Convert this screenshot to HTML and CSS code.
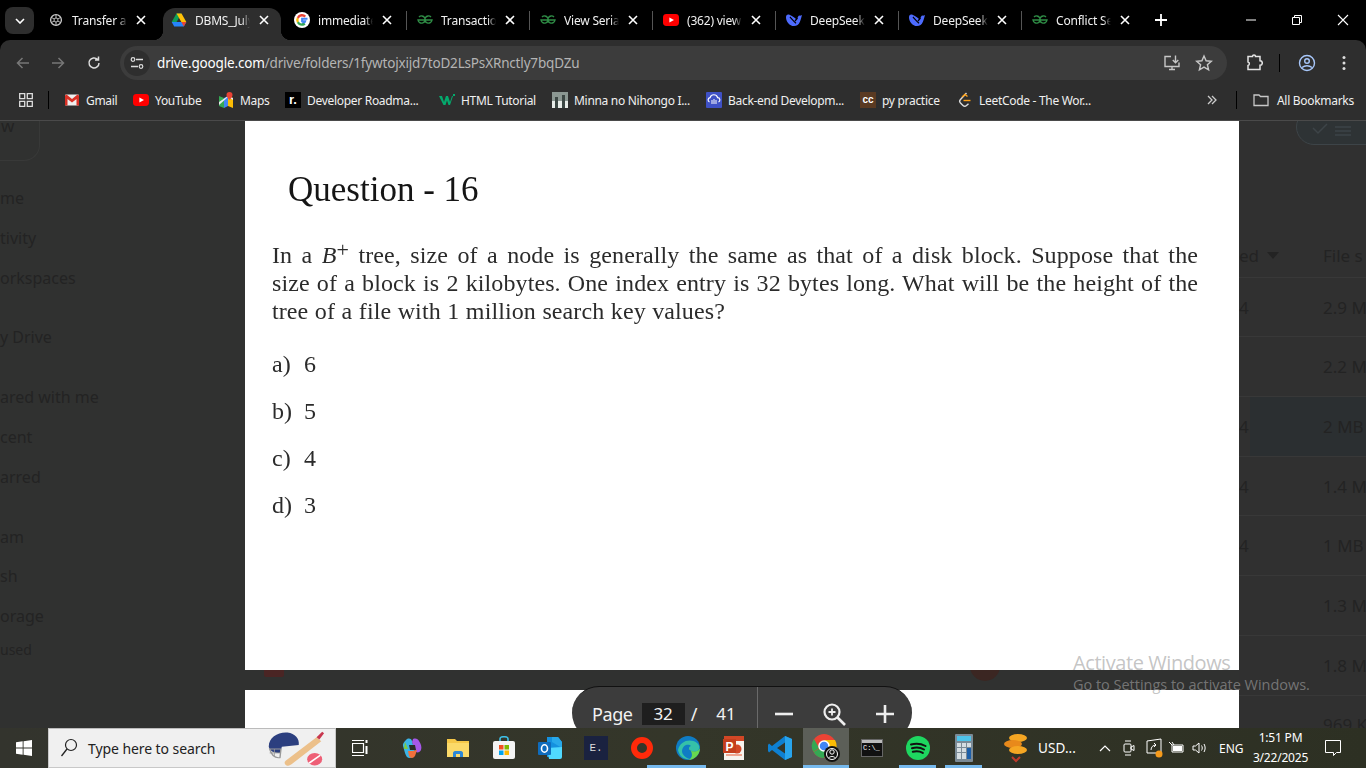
FILE: index.html
```html
<!DOCTYPE html>
<html lang="en">
<head>
<meta charset="utf-8">
<title>DBMS - Google Drive</title>
<link rel="stylesheet" href="styles.css">
</head>
<body>
<svg class="defs" width="0" height="0" aria-hidden="true">
  <symbol id="gfg" viewBox="0 0 16 16"><path d="M8 8h7a3.6 3.6 0 1 1-1-3M8 8H1a3.6 3.6 0 1 0 1-3M5.5 8h5" fill="none" stroke="#2f8d46" stroke-width="1.4"/></symbol>
  <symbol id="yt" viewBox="0 0 16 16"><rect y="2" width="16" height="12" rx="3.4" fill="#f00"/><path d="M6.4 5.4 11 8l-4.600 2.600z" fill="#fff"/></symbol>
  <symbol id="ds" viewBox="0 0 16 16"><path d="M16 3c-1 .6-2 .8-3 .5-1 1-1.500 2.500-2.500 4C9 6 6.500 4 3 2.600 1 2.200 0 3.400 0 5.400 0 9.500 3.500 14 8 14c2.800 0 4.800-1.500 5.800-4 .5-1.200 1.200-3.400 2.200-7z" fill="#4d6bfe"/><path d="M4 5c1.800 2 3.800 4.400 6 6.200M11.500 6 9 9" stroke="#000" stroke-width="1.200" fill="none"/></symbol>
  <symbol id="x" viewBox="0 0 10 10"><path d="M1 1l8 8M9 1l-8 8" stroke="#fff" stroke-width="1.600" fill="none"/></symbol>
</svg>

<header class="tabstrip">
  <button class="tab-menu"><svg width="10" height="6" viewBox="0 0 10 6"><path d="M1 1l4 4 4-4" stroke="#fff" stroke-width="1.600" fill="none"/></svg></button>
  <div class="tab">
    <svg class="fav" viewBox="0 0 16 16"><circle cx="8" cy="8" r="5.400" fill="none" stroke="#ccc" stroke-width="1.300"/><path d="M8 3v10M3.500 5.500l9 5M12.500 5.500l-9 5" stroke="#ccc" stroke-width=".9"/><circle cx="8" cy="8" r="2" fill="#000" stroke="#ccc" stroke-width=".9"/></svg>
    <span class="tab-title">Transfer a file</span><svg class="tab-x"><use href="#x"/></svg>
  </div>
  <div class="tab active">
    <svg class="fav" viewBox="0 0 16 16"><path d="M5.500 1.500h5L5.600 10H.7z" fill="#0f9d58"/><path d="M10.500 1.500 15.300 10h-5L5.500 1.500z" fill="#ffc107"/><path d="M.7 10h14.600l-2.500 4.500H3.200z" fill="#2684fc"/><path d="M10.300 10h5l-2.500 4.500z" fill="#ea4335"/></svg>
    <span class="tab-title">DBMS_July_2024</span><svg class="tab-x"><use href="#x"/></svg>
  </div>
  <div class="tab nosep">
    <svg class="fav" viewBox="0 0 16 16"><circle cx="8" cy="8" r="8" fill="#fff"/><path d="M13.500 6.800H8.100v2.400h3.100a3.300 3.300 0 0 1-3.200 2.300" fill="none" stroke="#4285f4" stroke-width="2"/><path d="M8 11.500a3.500 3.500 0 0 1-3.300-2.300L2.900 10.800A5.700 5.700 0 0 0 8 13.800c1.400 0 2.700-.5 3.600-1.300l-1.700-1.400c-.5.300-1.100.4-1.900.4z" fill="#34a853"/><path d="M4.700 9.200a3.600 3.600 0 0 1 0-2.400L2.900 5.200a5.700 5.700 0 0 0 0 5.600z" fill="#fbbc05"/><path d="M8 4.500c1 0 1.800.3 2.400.9l1.700-1.700A5.700 5.700 0 0 0 2.900 5.200l1.800 1.600A3.500 3.500 0 0 1 8 4.500z" fill="#ea4335"/></svg>
    <span class="tab-title">immediate recoverable</span><svg class="tab-x"><use href="#x"/></svg>
  </div>
  <div class="tab"><svg class="fav"><use href="#gfg"/></svg><span class="tab-title">Transaction</span><svg class="tab-x"><use href="#x"/></svg></div>
  <div class="tab"><svg class="fav"><use href="#gfg"/></svg><span class="tab-title">View Serializability</span><svg class="tab-x"><use href="#x"/></svg></div>
  <div class="tab"><svg class="fav"><use href="#yt"/></svg><span class="tab-title">(362) view serial</span><svg class="tab-x"><use href="#x"/></svg></div>
  <div class="tab"><svg class="fav"><use href="#ds"/></svg><span class="tab-title">DeepSeek</span><svg class="tab-x"><use href="#x"/></svg></div>
  <div class="tab"><svg class="fav"><use href="#ds"/></svg><span class="tab-title">DeepSeek</span><svg class="tab-x"><use href="#x"/></svg></div>
  <div class="tab"><svg class="fav"><use href="#gfg"/></svg><span class="tab-title">Conflict Serial</span><svg class="tab-x"><use href="#x"/></svg></div>
  <div class="newtab"><svg width="12" height="12" viewBox="0 0 12 12"><path d="M6 0v12M0 6h12" stroke="#fff" stroke-width="1.800"/></svg></div>
  <div class="winctrls">
    <svg width="46" height="40" viewBox="0 0 46 40"><path d="M18 20h10" stroke="#fff"/></svg>
    <svg width="46" height="40" viewBox="0 0 46 40"><path d="M18.500 17.500h7v7h-7zM20.500 17.500v-2h7v7h-2" fill="none" stroke="#fff"/></svg>
    <svg width="46" height="40" viewBox="0 0 46 40"><path d="M18 15l10 10M28 15l-10 10" stroke="#fff" stroke-width="1.100"/></svg>
  </div>
</header>

<section class="chrome">
  <nav class="toolbar">
    <svg class="tb back" viewBox="0 0 16 16"><path d="M14 8H2.500M7.500 3l-5 5 5 5" fill="none" stroke="#777" stroke-width="1.500"/></svg>
    <svg class="tb fwd" viewBox="0 0 16 16"><path d="M2 8h11.500M8.500 3l5 5-5 5" fill="none" stroke="#777" stroke-width="1.500"/></svg>
    <svg class="tb reload" viewBox="0 0 16 16"><path d="M13 8a5 5 0 1 1-1.500-3.600M12.500 1.500v3.500H9" fill="none" stroke="#ddd" stroke-width="1.500"/></svg>
    <div class="omnibox">
      <span class="tune"><svg width="14" height="14" viewBox="0 0 14 14"><path d="M6 3.500h7M1 10.500h7" stroke="#ddd" stroke-width="1.300"/><circle cx="3" cy="3.500" r="1.800" fill="none" stroke="#ddd" stroke-width="1.200"/><circle cx="11" cy="10.500" r="1.800" fill="none" stroke="#ddd" stroke-width="1.200"/></svg></span>
      <span class="url"><b>drive.google.com</b>/drive/folders/1fywtojxijd7toD2LsPsXRnctly7bqDZu</span>
      <svg class="om-ico" viewBox="0 0 18 18"><path d="M8 2.500H2v10h14v-4M6 15.500h6M9 12.500v3M12.500 1.500v7M9.800 6l2.700 2.800L15.300 6" fill="none" stroke="#c7c7c7" stroke-width="1.400"/></svg>
      <svg class="om-ico star" viewBox="0 0 18 18"><path d="M9 2l2.100 4.800 5.200.5-3.900 3.400 1.200 5.100L9 13.100l-4.600 2.700 1.200-5.100-3.900-3.400 5.200-.5z" fill="none" stroke="#c7c7c7" stroke-width="1.400"/></svg>
    </div>
    <svg class="tb ext" viewBox="0 0 18 18"><path d="M3 2.500h4.500a1.500 1.500 0 0 1 3 0H15v4.200a1.500 1.500 0 0 1 0 4.600v4.200H3v-4a1.800 1.800 0 0 0 0-3.500V6.500z" fill="none" stroke="#e3e3e3" stroke-width="1.500"/></svg>
    <i class="vsep"></i>
    <svg class="tb prof" viewBox="0 0 18 18"><circle cx="9" cy="9" r="7.500" fill="none" stroke="#a8c7fa" stroke-width="1.400"/><circle cx="9" cy="7" r="2.300" fill="none" stroke="#a8c7fa" stroke-width="1.400"/><path d="M4 13.500c2.800-2.400 7.200-2.400 10 0" fill="none" stroke="#a8c7fa" stroke-width="1.400"/></svg>
    <svg class="tb dots" viewBox="0 0 16 16"><circle cx="8" cy="2.500" r="1.500" fill="#ddd"/><circle cx="8" cy="8" r="1.500" fill="#ddd"/><circle cx="8" cy="13.500" r="1.500" fill="#ddd"/></svg>
  </nav>
  <nav class="bookmarks">
    <svg class="appsgrid" viewBox="0 0 14 14"><path d="M.7.700h5v5h-5zM8.300.700h5v5h-5zM.7 8.300h5v5h-5zM8.300 8.300h5v5h-5z" fill="none" stroke="#ddd" stroke-width="1.300"/></svg>
    <i class="vsep bm-sep"></i>
    <a class="bm w-gmail"><svg class="bm-ico" viewBox="0 0 16 16"><rect x="1" y="2.500" width="14" height="11" rx="1" fill="#eee"/><path d="M1 3.500v10h2.500V7l4.500 3.400L12.500 7v6.500H15v-10l-1.500-1L8 7 2.500 2.500z" fill="#d93025"/></svg>Gmail</a>
    <a class="bm w-yt"><svg class="bm-ico"><use href="#yt"/></svg>YouTube</a>
    <a class="bm w-maps"><svg class="bm-ico" viewBox="0 0 16 16"><path d="M1 4l5 2v10l-5-2z" fill="#34a853"/><path d="M6 6l4-2v10l-4 2z" fill="#4285f4"/><path d="M10 4l5 2v10l-5-2z" fill="#fbbc05"/><path d="M1 13 10 5l5 3V6L10 4 1 10z" fill="#e8eaed"/><path d="M11.500 0a3 3 0 0 1 3 3c0 2-3 5-3 5s-3-3-3-5a3 3 0 0 1 3-3z" fill="#ea4335"/></svg>Maps</a>
    <a class="bm w-road"><span class="bm-ico roadmap">r.</span>Developer Roadma...</a>
    <a class="bm w-html"><svg class="bm-ico" viewBox="0 0 16 16"><path d="M0 4h3l2 6 2-6h2l2 6 2-6h1l-3 9H9.500L8 8.500 6.500 13H4.500z" fill="#04aa6d"/><path d="M14 2h2v2h-2z" fill="#04aa6d"/></svg>HTML Tutorial</a>
    <a class="bm w-minna"><svg class="bm-ico" viewBox="0 0 16 16"><rect width="16" height="16" fill="#8b9792"/><rect y="9" width="16" height="7" fill="#e8ece9"/><path d="M3 5h3v11H3zM10 3h3v13h-3z" fill="#3c4744"/></svg>Minna no Nihongo I...</a>
    <a class="bm w-back"><svg class="bm-ico" viewBox="0 0 16 16"><rect width="16" height="16" rx="1" fill="#3f51c5"/><path d="M3.500 10a2.300 2.300 0 0 1 .6-4.400 3.900 3.900 0 0 1 7.500 0A2.300 2.300 0 0 1 12.500 10" fill="none" stroke="#fff" stroke-width="1.200"/><path d="M6 8v4M8 7v5M10 8v4" stroke="#fff"/></svg>Back-end Developm...</a>
    <a class="bm w-cc"><span class="bm-ico ccbadge">cc</span>py practice</a>
    <a class="bm w-lc"><svg class="bm-ico" viewBox="0 0 16 16"><path d="M9.500 1 3.500 7.500a2.500 2.500 0 0 0 0 3.500l2.500 2.500a2.500 2.500 0 0 0 3.500 0l2-1.800" fill="none" stroke="#ddd" stroke-width="1.400"/><path d="M6.500 8.500h7" stroke="#ffa116" stroke-width="1.400"/><path d="M5 5l3-2.500 2.500 2" fill="none" stroke="#ffa116" stroke-width="1.400"/></svg>LeetCode - The Wor...</a>
    <span class="bm-more"><svg width="10" height="10" viewBox="0 0 10 10"><path d="M1 1l4 4-4 4M5 1l4 4-4 4" fill="none" stroke="#ccc" stroke-width="1.300"/></svg></span>
    <i class="vsep bm-sep2"></i>
    <a class="bm bm-all"><svg class="bm-ico" viewBox="0 0 16 16"><path d="M1 3h5l1.500 1.500H15v9H1z" fill="none" stroke="#c7c7c7" stroke-width="1.300"/></svg>All Bookmarks</a>
  </nav>
</section>

<main class="stage">
  <div class="drive">
    <aside class="drive-side">
      <div class="newbtn">w</div>
      <p class="n1">me</p><p>tivity</p><p>orkspaces</p>
      <p class="n2">y Drive</p>
      <p class="n2">ared with me</p><p>cent</p><p>arred</p>
      <p class="n2">am</p><p>sh</p><p>orage</p>
      <p class="used">used</p>
    </aside>
    <section class="drive-list">
      <div class="viewchip"><svg width="60" height="18" viewBox="0 0 60 18"><path d="M16 6l5 5 9-9" fill="none" stroke="#3d4448" stroke-width="1.500"/><path d="M38 5h16M38 9h16M38 13h16" stroke="#3d4448" stroke-width="1.500"/></svg></div>
      <div class="head"><span class="c1">ed <i class="caret"></i></span><span>File s</span></div>
      <div class="row"><span class="c1">4</span><span>2.9 M</span></div>
      <div class="row"><span class="c1"></span><span>2.2 M</span></div>
      <div class="row sel"><span class="c1">4</span><span>2 MB</span></div>
      <div class="row"><span class="c1">4</span><span>1.4 M</span></div>
      <div class="row"><span class="c1">4</span><span>1 MB</span></div>
      <div class="row"><span class="c1"></span><span>1.3 M</span></div>
      <div class="row"><span class="c1"></span><span>1.8 M</span></div>
      <div class="row"><span class="c1"></span><span>969 K</span></div>
    </section>
  </div>
  <i class="peek-red"></i><i class="peek-circle"></i>

  <article class="page">
    <h1>Question - 16</h1>
    <div class="stem">
      <p>In a <em>B</em><sup>+</sup> tree, size of a node is generally the same as that of a disk block. Suppose that the</p>
      <p>size of a block is 2 kilobytes. One index entry is 32 bytes long. What will be the height of the</p>
      <p class="last">tree of a file with 1 million search key values?</p>
    </div>
    <ol class="opts">
      <li><span>a)</span><span>6</span></li>
      <li><span>b)</span><span>5</span></li>
      <li><span>c)</span><span>4</span></li>
      <li><span>d)</span><span>3</span></li>
    </ol>
  </article>
  <div class="page2"></div>

  <div class="pagebar">
    <span class="pb-label">Page</span>
    <span class="pb-num">32</span>
    <span class="pb-slash">/</span>
    <span class="pb-total">41</span>
    <i class="pb-div"></i>
    <svg class="pb-minus" width="18" height="4" viewBox="0 0 18 4"><path d="M0 2h18" stroke="#eee" stroke-width="2.600"/></svg>
    <svg class="pb-zoom" width="24" height="24" viewBox="0 0 24 24"><circle cx="10" cy="10" r="7.500" fill="none" stroke="#eee" stroke-width="2.200"/><path d="M15.500 15.500 23 23" stroke="#eee" stroke-width="2.600"/><path d="M10 6.500v7M6.500 10h7" stroke="#eee" stroke-width="1.800"/></svg>
    <svg class="pb-plus" width="18" height="18" viewBox="0 0 18 18"><path d="M0 9h18M9 0v18" stroke="#eee" stroke-width="2.600"/></svg>
  </div>

  <div class="activate">
    <div class="a1">Activate Windows</div>
    <div class="a2">Go to Settings to activate Windows.</div>
  </div>
</main>

<footer class="taskbar">
  <div class="start"><svg width="16" height="16" viewBox="0 0 18 18"><path d="M0 2.600 7.500 1.500v7H0zM8.500 1.400 18 0v8.500H8.500zM0 9.500h7.500v7L0 15.400zM8.500 9.500H18V18L8.500 16.600z" fill="#fff"/></svg></div>
  <div class="search">
    <svg width="18" height="20" viewBox="0 0 18 20"><circle cx="11" cy="7" r="5.500" fill="none" stroke="#222" stroke-width="1.200"/><path d="M7 11 1.500 18" stroke="#222" stroke-width="1.300"/></svg>
    <span>Type here to search</span>
    <svg class="cricket" width="60" height="36" viewBox="0 0 64 46" preserveAspectRatio="none">
      <path d="M4 20C4 8 14 1 24 2c8 1 13 8 12 16l-18 2-2 8C10 28 5 26 4 20z" fill="#2c3f7f"/>
      <path d="M5 23h12l-1 11c-5 1-9-3-11-11z" fill="none" stroke="#999" stroke-width="1.500"/>
      <path d="M10 23v10M5 28h11" stroke="#999"/>
      <path d="M55 8 22 38c-2 2-1 5 1 6 2 1 4 0 6-2L60 13z" fill="#ecc08a"/>
      <path d="M55 8 61 1l2 2-5 8z" fill="#c8374e"/>
      <circle cx="53" cy="36" r="8" fill="#ee5f76"/>
      <path d="M47 41 59 31" stroke="#fff" stroke-width="2"/>
    </svg>
  </div>
  <div class="tk tk-view"><svg width="16" height="18" viewBox="0 0 16 18"><path d="M.5 4.500h11v9H.5zM0 1.500h12M0 16.500h12" fill="none" stroke="#fff" stroke-width="1.200"/><path d="M14.500 1v3M14.500 7v8" stroke="#fff" stroke-width="2"/></svg></div>
  <div class="tk"><svg width="22" height="22" viewBox="0 0 22 22"><path d="M5 3c2-2 5-2 6 1l3 11c1 3-2 6-5 6-3 0-4-2-5-5L2 9c-.6-2 1-4 3-6z" fill="#3bb4e6"/><path d="M12 2c3-1 5 0 6 2 2 3 3 6 2 9-1 2-3 3-5 2L11 5z" fill="#a658e8"/><path d="M7 14c3 0 6 0 9-1l-2 6c-2 3-5 2-6 0z" fill="#f0703c"/><path d="M4 5 7 12 3 12z" fill="#7ecb3f"/><path d="M8 8h6l1 5H9z" fill="#2c2d28"/></svg></div>
  <div class="tk"><svg width="22" height="20" viewBox="0 0 22 20"><path d="M0 1h8l2 2h12v16H0z" fill="#f5c748"/><path d="M0 5h22v14H0z" fill="#fbd969"/><path d="M6 19v-4c0-1 1-2 2-2h6c1 0 2 1 2 2v4h-3v-3H9v3z" fill="#2d87d6"/></svg></div>
  <div class="tk"><svg width="22" height="24" viewBox="0 0 22 24"><path d="M7 6V3c0-3 8-3 8 0v3" fill="none" stroke="#3ec0e8" stroke-width="1.600"/><rect y="5" width="22" height="18" rx="2" fill="#f4f4f4"/><path d="M6 9h4.500v4.500H6z" fill="#f25022"/><path d="M11.500 9H16v4.500h-4.500z" fill="#7fba00"/><path d="M6 14.500h4.500V19H6z" fill="#00a4ef"/><path d="M11.500 14.500H16V19h-4.500z" fill="#ffb900"/></svg></div>
  <div class="tk"><svg width="24" height="24" viewBox="0 0 24 24"><path d="M9 1h11l4 5v15H9z" fill="#1490df"/><path d="M14 1h6l4 5v6l-10-6z" fill="#28a8ea"/><path d="M9 12l15-1v10a2 2 0 0 1-2 2H11z" fill="#50d9ff"/><rect y="6" width="13" height="13" rx="1" fill="#0f6cbd"/><ellipse cx="6.500" cy="12.500" rx="3" ry="3.700" fill="none" stroke="#fff" stroke-width="1.600"/></svg></div>
  <div class="tk"><span class="eclipse">E.</span></div>
  <div class="tk"><svg width="22" height="22" viewBox="0 0 22 22"><circle cx="11" cy="11" r="8" fill="none" stroke="#ff2a0a" stroke-width="6"/></svg></div>
  <div class="tk on-left"><svg width="24" height="24" viewBox="0 0 24 24"><circle cx="12" cy="12" r="12" fill="#0f7cc4"/><path d="M2 14C4 5 14 2 21 7c3 2 3 7 0 8-3 1-8 0-8-3 0-1 1-2 2-2-2-2-8-2-9 5 0 3 3 7 8 8C7 24 3 19 2 14z" fill="#35c1a8"/><path d="M13 12c0 3 5 4 8 3 2-.5 3-3 3-3 0 6-5 12-12 12 4-1 6-6 1-12z" fill="#68d94f"/></svg></div>
  <div class="tk"><svg width="22" height="26" viewBox="0 0 22 26"><rect x="1" y="1" width="20" height="24" fill="#f7f3ee"/><path d="M1 1h20v5H1z" fill="#d24726"/><circle cx="14" cy="14" r="4.500" fill="#d24726"/><path d="M3 19h16v2H3z" fill="#f0a58f"/><rect x="0" y="4" width="13" height="14" fill="#c43e1c"/><text class="ppt" x="2.500" y="15.500">P</text></svg></div>
  <div class="tk"><svg width="24" height="26" viewBox="0 0 24 26"><path d="M17 1 24 4v18l-7 3L4 15l-3 2.500L0 16v-6l1-1.500L4 11zM17 7.500 9 13l8 5.500z" fill="#0e80d2"/><path d="M17 1l7 3v18l-7 3z" fill="#28a4ec"/></svg></div>
  <div class="tk tk-active"><svg width="30" height="30" viewBox="0 0 30 30"><circle cx="13" cy="13" r="12" fill="#ea4335"/><path d="M13 13 2.500 19A12 12 0 0 0 13 25l5-8z" fill="#34a853"/><path d="M13 7h11a12 12 0 0 1-10 18l5-9z" fill="#fbbc05"/><path d="M3 6l5 9-5.500 4A12 12 0 0 1 3 6z" fill="#34a853"/><circle cx="13" cy="13" r="5" fill="#4285f4" stroke="#fff" stroke-width="1.500"/><circle cx="21" cy="21" r="8" fill="#111"/><circle cx="21" cy="19" r="2.200" fill="none" stroke="#fff"/><circle cx="21" cy="21" r="5.500" fill="none" stroke="#fff"/><path d="M17.500 25c2-2 5-2 7 0" fill="none" stroke="#fff"/></svg></div>
  <div class="tk"><span class="cmd"><i></i><b>C:\_</b></span></div>
  <div class="tk on"><svg width="24" height="24" viewBox="0 0 24 24"><circle cx="12" cy="12" r="12" fill="#1ed760"/><path d="M5 8.500c5-1.500 10-1 14.500 1.500M6 12.200c4-1.100 8.500-.8 12 1.300M6.800 15.800c3.500-.9 7-.6 10 1.100" fill="none" stroke="#111" stroke-width="2" stroke-linecap="round"/></svg></div>
  <div class="tk on"><svg width="18" height="28" viewBox="0 0 18 28"><rect width="18" height="28" rx="1" fill="#7a8a96"/><rect x="2" y="2" width="14" height="5" fill="#4ec4ea"/><path d="M2 9h4v4H2zM7 9h4v4H7zM12 9h4v4h-4zM2 14h4v4H2zM7 14h4v4H7zM2 19h4v6H2zM7 19h4v6H7z" fill="#d5dde2"/><path d="M12 14h4v11h-4z" fill="#1d5fa8"/></svg></div>
  <div class="usd">
    <svg width="24" height="30" viewBox="0 0 24 30"><ellipse cx="14" cy="5" rx="9" ry="4" fill="#f5a623"/><ellipse cx="9" cy="11" rx="9" ry="4" fill="#e8891b"/><ellipse cx="14" cy="17" rx="9" ry="4" fill="#f5a623"/><path d="M8 24l4 4 4-4" fill="none" stroke="#c0392b" stroke-width="2"/></svg>
    <span>USD...</span>
  </div>
  <div class="tray">
    <svg class="t-caret" width="12" height="7" viewBox="0 0 12 7"><path d="M1 6l5-5 5 5" fill="none" stroke="#fff" stroke-width="1.200"/></svg>
    <svg class="t-cam" width="12" height="18" viewBox="0 0 12 18"><rect x="1" y="5" width="7" height="8" rx="1" fill="none" stroke="#fff"/><path d="M8 8l3-1.500v5L8 10zM2 2h6M2 16h6" fill="none" stroke="#fff"/></svg>
    <svg class="t-share" width="18" height="20" viewBox="0 0 18 20"><path d="M1 3l14-2v14H1z" fill="none" stroke="#fff"/><path d="M5 12c0-3 2-5 5-5M8 5l2 2-2 2" fill="none" stroke="#fff"/><circle cx="13" cy="16" r="3.500" fill="#f59a1b"/></svg>
    <svg class="t-batt" width="16" height="14" viewBox="0 0 16 14"><path d="M4 4h11v7H4zM1 1l3 3M4 1l2 3" fill="none" stroke="#fff"/><rect x="5" y="5" width="9" height="5" fill="#fff"/></svg>
    <svg class="t-vol" width="16" height="14" viewBox="0 0 16 14"><path d="M1 5h2.500L7 2v10L3.500 9H1zM9.500 4.500c1 1.500 1 3.500 0 5M12 3c1.500 2.500 1.500 5.500 0 8" fill="none" stroke="#fff"/></svg>
    <span class="t-eng">ENG</span>
    <div class="t-clock"><span>1:51 PM</span><span>3/22/2025</span></div>
    <svg class="t-note" width="16" height="16" viewBox="0 0 16 16"><path d="M.5.500h15v12h-4l-3 3v-3h-8z" fill="none" stroke="#fff"/></svg>
  </div>
</footer>
</body>
</html>
```
FILE: styles.css
```css
* { box-sizing: border-box; }
html, body { margin: 0; height: 100%; overflow: hidden; }
body {
  width: 1366px; height: 768px; background: #000; color: #fff;
  display: flex; flex-direction: column;
  font-family: "Noto Sans", "Open Sans", sans-serif;
}
.defs { position: absolute; }
i { display: block; }

/* tab strip */
.tabstrip { height: 40px; flex: none; display: flex; align-items: stretch; background: #000; padding-left: 5px; position: relative; }
.tab-menu { width: 29px; height: 27px; margin-top: 7px; margin-right: 3px; border: 0; border-radius: 8px; background: #2e2e2e; display: flex; align-items: center; justify-content: center; padding: 0; }
.tab { width: 123px; flex: none; display: flex; align-items: center; position: relative; padding-left: 11px; font-size: 12px; letter-spacing: -.2px; }
.tab::before { content: ""; position: absolute; left: 0; top: 11px; height: 19px; width: 1px; background: #555; }
.tab:first-of-type::before, .tab.nosep::before { display: none; }
.tab.active { background: #2e2e2e; border-radius: 12px 12px 0 0; margin: 8px 2px 0 3px; width: 118px; padding-left: 8px; padding-bottom: 8px; }
.tab.active::before, .tab.active::after { content: ""; position: absolute; bottom: 0; top: auto; width: 10px; height: 10px; background: none; }
.tab.active::before { left: -10px; background: radial-gradient(circle at 0 0, transparent 10px, #2e2e2e 10.500px); }
.tab.active::after { right: -10px; background: radial-gradient(circle at 100% 0, transparent 10px, #2e2e2e 10.500px); }
.fav { width: 16px; height: 16px; flex: none; }
.tab-title { width: 55px; margin-left: 8px; white-space: nowrap; overflow: hidden; color: #f0f0f0; -webkit-mask-image: linear-gradient(90deg, #000 85%, transparent); mask-image: linear-gradient(90deg, #000 85%, transparent); }
.tab-x { width: 10px; height: 10px; margin-left: 9px; flex: none; }
.newtab { width: 34px; display: flex; align-items: center; justify-content: center; }
.winctrls { margin-left: auto; display: flex; }
.winctrls svg { display: block; }

/* toolbar */
.chrome { flex: none; height: 81px; background: #2e2e2e; border-radius: 10px 10px 0 0; border-bottom: 1px solid #4a4a4a; }
.toolbar { height: 40px; display: flex; align-items: center; padding-left: 15px; padding-top: 5px; }
.tb { width: 16px; height: 16px; flex: none; }
.fwd { margin-left: 19px; }
.reload { margin-left: 20px; }
.omnibox { width: 1107px; height: 34px; margin-left: 18px; background: #3c3c3c; border-radius: 17px; display: flex; align-items: center; padding-left: 4px; font-size: 13.500px; }
.tune { width: 26px; height: 26px; border-radius: 50%; background: #2e2e2e; display: flex; align-items: center; justify-content: center; }
.url { margin-left: 7px; color: #b4b4b4; white-space: nowrap; letter-spacing: -.17px; }
.url b { color: #fff; font-weight: 400; }
.om-ico { width: 18px; height: 18px; margin-left: auto; }
.om-ico.star { margin-left: 14px; margin-right: 14px; }
.ext { width: 18px; height: 18px; margin-left: 18px; }
.vsep { width: 1px; height: 18px; background: #000; flex: none; }
.toolbar .vsep { margin-left: 16px; }
.prof { width: 18px; height: 18px; margin-left: 18px; }
.dots { margin-left: 20px; }

/* bookmarks */
.bookmarks { height: 40px; display: flex; align-items: center; padding-left: 19px; font-size: 12px; letter-spacing: -.3px; color: #f0f0f0; }
.appsgrid { width: 14px; height: 14px; flex: none; }
.bm-sep { margin-left: 15px; margin-right: 15px; }
.bm { display: flex; align-items: center; gap: 6px; white-space: nowrap; flex: none; }
.bm-ico { width: 16px; height: 16px; flex: none; }
.w-gmail { width: 69px; } .w-yt { width: 85px; } .w-maps { width: 67px; } .w-road { width: 154px; }
.w-html { width: 113px; } .w-minna { width: 154px; } .w-back { width: 154px; } .w-cc { width: 97px; } .w-lc { width: 250px; }
.roadmap { background: #000; color: #fff; font: 700 13px/16px "Liberation Sans", sans-serif; text-align: center; letter-spacing: 0; }
.ccbadge { background: #5a3a22; color: #fff; font: 700 10px/16px "Liberation Sans", sans-serif; text-align: center; letter-spacing: 0; }
.bm-more { width: 29px; display: flex; align-items: center; }
.bm-sep2 { margin-left: 0; margin-right: 16px; }
.bm-all { gap: 8px; }

/* stage */
.stage { flex: 1; position: relative; overflow: hidden; background: #303130; }
.drive { display: flex; justify-content: space-between; height: 100%; color: #232323; }
.drive-side { width: 200px; font-size: 16px; padding: 0; }
.drive-side p { margin: 0; height: 39.800px; line-height: 39.800px; }
.drive-side p.n1 { margin-top: 18px; }
.drive-side p.n2 { margin-top: 20px; }
.drive-side p.used { height: 20px; line-height: 20px; font-size: 14px; margin-top: 3px; }
.newbtn { width: 42px; height: 40px; margin-left: -2px; border: 1px solid #383938; border-top: 0; border-radius: 0 0 16px 0; font-size: 17px; line-height: 10px; padding-left: 2px; }
.drive-list { width: 127px; font-size: 17px; position: relative; background: #303030; }
.viewchip { position: absolute; left: 57px; top: -12px; width: 90px; height: 36px; border: 1px solid #3d4448; border-radius: 18px; background: #2e3335; padding-top: 12px; }
.head, .row { display: flex; align-items: center; height: 59.700px; border-bottom: 1px solid #383838; white-space: nowrap; overflow: hidden; }
.head { margin-top: 97px; padding-top: 16px; }
.c1 { width: 84px; flex: none; }
.row.sel { background: linear-gradient(90deg, #303030 11px, #2b2f31 11px); }
.caret { display: inline-block; border: 6px solid transparent; border-top: 7px solid #232323; border-bottom: 0; margin-left: 4px; vertical-align: 3px; }
.peek-red { position: absolute; left: 264px; top: 547px; width: 20px; height: 9px; background: #4a2524; border-radius: 2px; }
.peek-circle { position: absolute; left: 970px; top: 530px; width: 30px; height: 30px; border-radius: 50%; background: #3b2622; }

/* pdf page */
.page { position: absolute; left: 245px; top: 0; width: 994px; height: 549px; background: #fff; padding: 50px 41px 0 27px; color: #2b2b2b; font-family: "Liberation Serif", serif; }
.page h1 { margin: 0 0 32px 16px; font-size: 35px; font-weight: 400; line-height: 38px; color: #151515; filter: blur(.3px); }
.stem { font-size: 24px; line-height: 28px; filter: blur(.3px); letter-spacing: .1px; }
.stem p { margin: 0; text-align: justify; text-align-last: justify; white-space: nowrap; }
.stem p.last { text-align-last: left; word-spacing: .4px; }
.stem sup { font-size: 22px; line-height: 0; vertical-align: 6px; }
.opts { list-style: none; margin: 25px 0 0; padding: 0; font-size: 24px; filter: blur(.3px); }
.opts li { height: 47px; line-height: 28px; display: flex; gap: 10px; }
.opts li span:first-child { width: 22px; }
.page2 { position: absolute; left: 245px; top: 569px; width: 994px; height: 40px; background: #fff; }

/* floating PDF toolbar */
.pagebar { position: absolute; left: 572px; top: 565px; width: 340px; height: 54px; border-radius: 27px; background: #3c3c3c; border-top: 1px solid #111; display: flex; align-items: center; color: #f2f2f2; font-size: 18px; padding-left: 20px; }
.pb-label { letter-spacing: -.4px; }
.pb-num { width: 43px; height: 22px; line-height: 22px; margin-left: 9px; background: #1e1e1e; text-align: center; font-size: 17px; }
.pb-slash { margin-left: 6px; }
.pb-total { margin-left: 19px; font-size: 17px; }
.pb-div { width: 1px; height: 54px; background: #6a6a6a; margin-left: 21px; }
.pb-minus { margin-left: 17px; }
.pb-zoom { margin-left: 29px; }
.pb-plus { margin-left: 30px; }

/* watermark */
.activate { position: absolute; left: 1073px; top: 529px; color: rgba(160,160,160,.62); white-space: nowrap; }
.a1 { font-size: 20px; line-height: 25px; font-family: "Open Sans", sans-serif; letter-spacing: -.42px; }
.a2 { font-size: 14.500px; line-height: 20px; font-family: "Open Sans", sans-serif; letter-spacing: -.02px; }

/* taskbar */
.taskbar { height: 40px; flex: none; display: flex; align-items: center; background: linear-gradient(90deg, #33342d, #343629 50%, #2d3023); }
.start { width: 48px; height: 40px; display: flex; align-items: center; justify-content: center; }
.search { width: 288px; height: 40px; background: #f0f0f0; border: 1px solid #c8c8c8; border-top-color: #bbb; display: flex; align-items: center; padding-left: 11px; color: #222; font-size: 14px; position: relative; }
.search span { margin-left: 10px; letter-spacing: -.08px; }
.cricket { position: absolute; left: 216px; top: 2px; }
.tk { width: 46px; height: 40px; flex: none; display: flex; align-items: center; justify-content: center; position: relative; }
.tk-view { width: 53px; padding-right: 5px; }
.on::after, .on-left::after, .tk-active::after { content: ""; position: absolute; bottom: 0; height: 3px; background: #76b9ed; left: 4px; right: 5px; }
.on-left::after { left: -18px; right: 5px; }
.tk-active { background: #5c5f58; }
.tk-active::after { left: 0; right: 0; }
.eclipse { width: 24px; height: 24px; background: #1a2240; color: #ddd; font: 11px/24px "Liberation Mono", monospace; text-align: center; }
.ppt { font: 700 12px "Liberation Sans", sans-serif; fill: #fff; }
.cmd { width: 22px; height: 18px; background: #111; border: 1px solid #666; position: relative; display: block; }
.cmd i { height: 3px; background: #bbb; }
.cmd b { display: block; font: 7px/11px "Liberation Mono", monospace; color: #fff; padding-left: 1px; }
.usd { display: flex; align-items: center; gap: 10px; margin-left: 17px; font-size: 13.500px; letter-spacing: .1px; width: 82px; flex: none; }
.tray { flex: 1; display: flex; align-items: center; color: #fff; font-size: 12px; padding-left: 13px; }
.t-cam { margin-left: 12px; }
.t-share { margin-left: 11px; }
.t-batt { margin-left: 4px; }
.t-vol { margin-left: 8px; }
.t-eng { margin-left: 11px; }
.t-clock { display: flex; flex-direction: column; align-items: center; margin-left: 7px; width: 60px; line-height: 20px; letter-spacing: -.2px; }
.t-note { margin-left: 14px; }
```
